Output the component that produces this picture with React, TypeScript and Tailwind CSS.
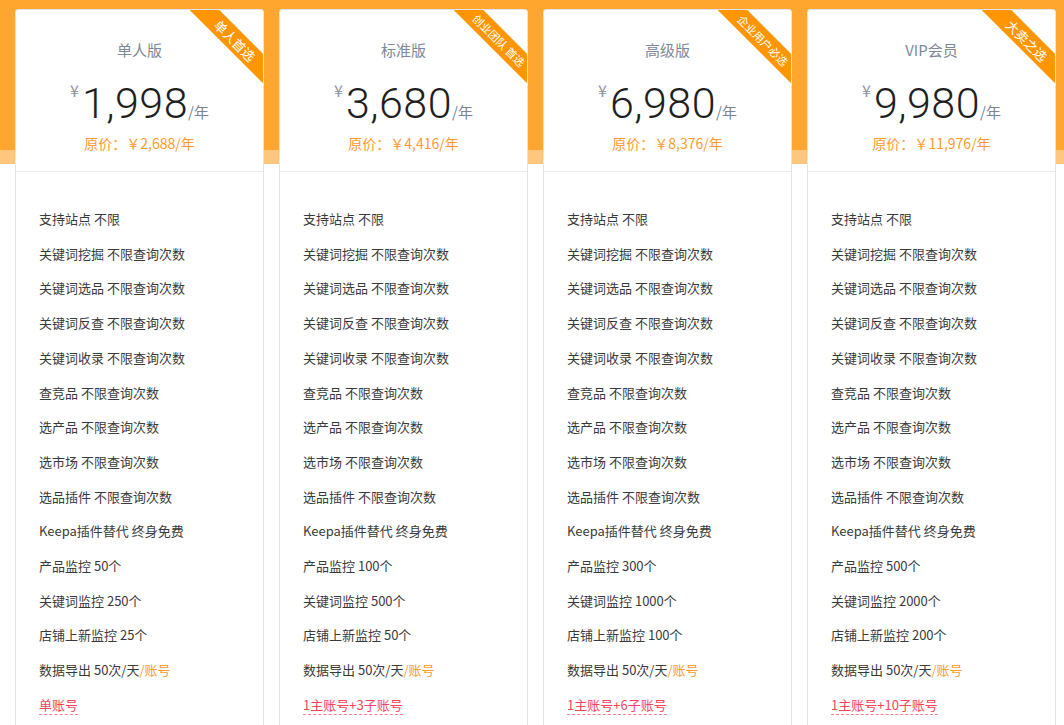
import React from "react"

interface PlanType {
    name: string;
    price: string;
    orig: string;
    tag: string;
    tagSize: string;
    monitor: string[];
    account: string;
}

const plans: PlanType[] = [
    { name: "单人版", price: "1,998", orig: "2,688", tag: "单人首选", tagSize: "text-[13px]", monitor: ["50", "250", "25"], account: "单账号" },
    { name: "标准版", price: "3,680", orig: "4,416", tag: "创业团队 首选", tagSize: "text-[11px]", monitor: ["100", "500", "50"], account: "1主账号+3子账号" },
    { name: "高级版", price: "6,980", orig: "8,376", tag: "企业用户必选", tagSize: "text-[11px]", monitor: ["300", "1000", "100"], account: "1主账号+6子账号" },
    { name: "VIP会员", price: "9,980", orig: "11,976", tag: "大卖之选", tagSize: "text-[13px]", monitor: ["500", "2000", "200"], account: "1主账号+10子账号" },
]

const unlimited = ["关键词挖掘", "关键词选品", "关键词反查", "关键词收录", "查竞品", "选产品", "选市场", "选品插件"]

function PlanCard({ plan }: { plan: PlanType }) {
    return (
        <div className="relative w-[249px] shrink-0 overflow-hidden rounded-[3px] border border-[#e4e4ef] bg-white">
            {/* corner ribbon */}
            <div className={"absolute right-[-32px] top-[20px] flex h-[21px] w-[120px] rotate-45 items-center justify-center bg-[#ff9500] text-white " + plan.tagSize}>
                {plan.tag}
            </div>

            <div className="flex h-[162px] flex-col items-center border-b border-[#ebebf3] pt-[30px]">
                <p className="text-[15px] leading-[20px] text-[#7e8898]">{plan.name}</p>
                <div className="mt-[21px] whitespace-nowrap leading-none">
                    <span className="mr-[3px] inline-block align-top text-[16px] leading-[18px] text-[#8a93a2]">¥</span>
                    <span className="font-['Roboto'] text-[43px] font-light leading-[44px] tracking-[0.5px] text-[#1f1f1f]">{plan.price}</span>
                    <span className="text-[15px] text-[#7a8494]">/年</span>
                </div>
                <p className="mt-[8px] text-[14px] leading-[20px] text-[#ff9a2e]">原价：￥{plan.orig}/年</p>
            </div>

            <ul className="px-[23px] pt-[30px] pb-[40px] text-[13px] leading-[34.7px] text-[#3a3a3a]">
                <li>支持站点 不限</li>
                {unlimited.map((u, i) => (
                    <li key={"u" + i}>{u} 不限查询次数</li>
                ))}
                <li>Keepa插件替代 终身免费</li>
                <li>产品监控 {plan.monitor[0]}个</li>
                <li>关键词监控 {plan.monitor[1]}个</li>
                <li>店铺上新监控 {plan.monitor[2]}个</li>
                <li>数据导出 50次/天<span className="text-[#ff9a2e]">/账号</span></li>
                <li>
                    <span className="inline-block border-b border-dashed border-[#ff7d8e] leading-[18px] text-[#f5455c]">{plan.account}</span>
                </li>
            </ul>
        </div>
    )
}

export default function App() {
    return (
        <div className="min-h-[725px] bg-[linear-gradient(180deg,#ffa62f_0px,#ffa62f_150px,#ffc67e_150px,#ffc67e_164px,#ffffff_164px)] font-['Noto_Sans_CJK_SC','Noto_Sans',sans-serif]">
            <div className="flex gap-[15px] pl-[15px] pt-[9px]">
                {plans.map((p, i) => (
                    <PlanCard key={"plan" + i} plan={p} />
                ))}
            </div>
        </div>
    )
}
